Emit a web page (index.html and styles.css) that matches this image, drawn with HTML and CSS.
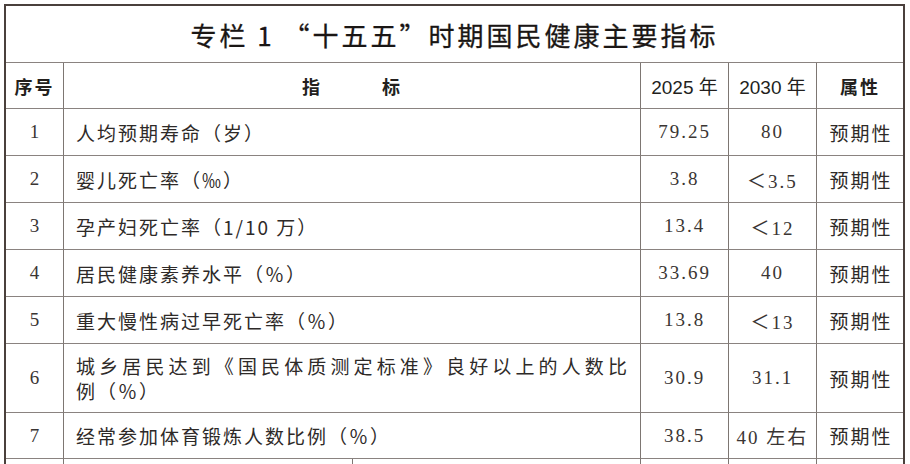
FILE: index.html
```html
<!DOCTYPE html>
<html lang="zh-CN">
<head>
<meta charset="utf-8">
<title>专栏 1 “十五五”时期国民健康主要指标</title>
<link rel="stylesheet" href="styles.css">
</head>
<body>
<table class="tbl">
  <colgroup>
    <col class="c-no">
    <col class="c-name-a">
    <col class="c-name-b">
    <col class="c-val">
    <col class="c-val">
    <col class="c-attr">
  </colgroup>
  <tr class="r-title">
    <td class="title" colspan="6">专栏 1 “十五五”时期国民健康主要指标</td>
  </tr>
  <tr class="r-head">
    <th class="h">序号</th>
    <th class="h" colspan="2">指　　　标</th>
    <th class="h hy">2025 年</th>
    <th class="h hy">2030 年</th>
    <th class="h">属性</th>
  </tr>
  <tr class="r">
    <td class="no">1</td>
    <td class="name" colspan="2">人均预期寿命（岁）</td>
    <td class="num">79.25</td>
    <td class="num">80</td>
    <td class="attr">预期性</td>
  </tr>
  <tr class="r">
    <td class="no">2</td>
    <td class="name" colspan="2">婴儿死亡率（‰）</td>
    <td class="num">3.8</td>
    <td class="num">＜3.5</td>
    <td class="attr">预期性</td>
  </tr>
  <tr class="r">
    <td class="no">3</td>
    <td class="name" colspan="2">孕产妇死亡率（1/10 万）</td>
    <td class="num">13.4</td>
    <td class="num">＜12</td>
    <td class="attr">预期性</td>
  </tr>
  <tr class="r">
    <td class="no">4</td>
    <td class="name" colspan="2">居民健康素养水平（％）</td>
    <td class="num">33.69</td>
    <td class="num">40</td>
    <td class="attr">预期性</td>
  </tr>
  <tr class="r">
    <td class="no">5</td>
    <td class="name" colspan="2">重大慢性病过早死亡率（％）</td>
    <td class="num">13.8</td>
    <td class="num">＜13</td>
    <td class="attr">预期性</td>
  </tr>
  <tr class="r r-tall">
    <td class="no">6</td>
    <td class="name" colspan="2"><span class="jline">城乡居民达到《国民体质测定标准》良好以上的人数比</span>例（％）</td>
    <td class="num">30.9</td>
    <td class="num">31.1</td>
    <td class="attr">预期性</td>
  </tr>
  <tr class="r r-short">
    <td class="no">7</td>
    <td class="name" colspan="2">经常参加体育锻炼人数比例（％）</td>
    <td class="num">38.5</td>
    <td class="num">40 左右</td>
    <td class="attr">预期性</td>
  </tr>
  <tr class="r r-last">
    <td class="no"></td>
    <td class="name"></td>
    <td class="name"></td>
    <td class="num"></td>
    <td class="num"></td>
    <td class="attr"></td>
  </tr>
</table>
</body>
</html>
```

FILE: styles.css
```css
html, body {
  margin: 0;
  padding: 0;
  background: #ffffff;
}

body {
  padding: 4px 0 0 4px;
  font-family: "Noto Sans CJK SC", "Liberation Sans", sans-serif;
  color: #2e2a28;
  overflow: hidden;
}

.tbl {
  border-collapse: separate;
  border-spacing: 0;
  table-layout: fixed;
  width: 901px;
  border: 2px solid #4a403c;
  border-bottom: none;
}

.c-no { width: 58px; }
.c-name-a { width: 289px; }
.c-name-b { width: 288px; }
.c-val { width: 88px; }
.c-attr { width: 86px; }

.tbl td,
.tbl th {
  box-sizing: border-box;
  padding: 0;
  border-right: 1px solid #7d7672;
  border-bottom: 1px solid #8a8380;
  vertical-align: middle;
}

.tbl tr > :last-child {
  border-right: none;
}

.r-title { height: 57px; }
.r-head { height: 46px; }
.r { height: 47px; }
.r-tall { height: 69px; }
.r-short { height: 46px; }
.r-last { height: 30px; }

.title {
  text-align: center;
  font-size: 26px;
  font-weight: 400;
  letter-spacing: 3px;
  color: #1a1614;
  padding-left: 3px;
  -webkit-text-stroke: 0.3px #1a1614;
}

.h {
  font-size: 18px;
  font-weight: 700;
  letter-spacing: 2px;
  text-align: center;
  color: #231f1d;
}

.hy {
  font-family: "Liberation Sans", "Noto Sans CJK SC", sans-serif;
  font-weight: 400;
  font-size: 19px;
  letter-spacing: 0;
}

.no {
  font-family: "Liberation Serif", "Noto Sans CJK SC", serif;
  font-size: 19px;
  text-align: center;
  color: #3a3533;
}

.name {
  font-size: 19px;
  letter-spacing: 2px;
  padding: 0 11px 0 12px !important;
  line-height: 25px;
  color: #2e2a28;
}

.jline {
  display: block;
  text-align: justify;
  text-align-last: justify;
}

.num {
  font-family: "Liberation Serif", "Noto Sans CJK SC", serif;
  font-size: 19px;
  letter-spacing: 2px;
  text-align: center;
  color: #3a3533;
}

.attr {
  font-size: 19px;
  letter-spacing: 2px;
  text-align: center;
  padding-left: 2px !important;
  color: #2e2a28;
}
```
